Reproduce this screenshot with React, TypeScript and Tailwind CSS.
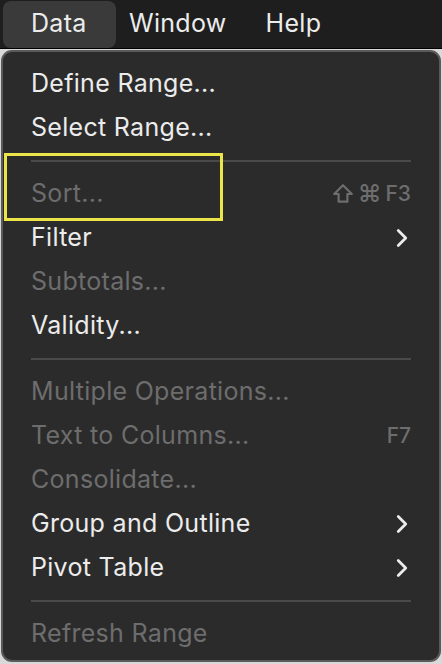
import { ChevronRight } from "lucide-react";

type Item =
  | { kind: "sep" }
  | { kind: "item"; label: string; disabled?: boolean; shortcut?: string; sub?: boolean; boxed?: boolean };

const ITEMS: Item[] = [
  { kind: "item", label: "Define Range..." },
  { kind: "item", label: "Select Range..." },
  { kind: "sep" },
  { kind: "item", label: "Sort...", disabled: true, shortcut: "F3", boxed: true },
  { kind: "item", label: "Filter", sub: true },
  { kind: "item", label: "Subtotals...", disabled: true },
  { kind: "item", label: "Validity..." },
  { kind: "sep" },
  { kind: "item", label: "Multiple Operations...", disabled: true },
  { kind: "item", label: "Text to Columns...", disabled: true, shortcut: "F7" },
  { kind: "item", label: "Consolidate...", disabled: true },
  { kind: "item", label: "Group and Outline", sub: true },
  { kind: "item", label: "Pivot Table", sub: true },
  { kind: "sep" },
  { kind: "item", label: "Refresh Range", disabled: true },
];

const App = () => {
  return (
    <div className="w-[442px] h-[664px] bg-[#d9d9d9] overflow-hidden font-['Inter',sans-serif]">
      {/* Menu bar */}
      <div className="h-[49px] bg-[#1e1e1e] border-b border-black flex items-center px-[3px]">
        <div className="h-[47px] w-[113px] rounded-lg bg-[#3a3a3a] flex items-center pl-[28px] text-[25px] tracking-[0.3px] text-[#ececec]">
          Data
        </div>
        <div className="ml-[13px] text-[25px] tracking-[0.3px] text-[#ececec]">Window</div>
        <div className="ml-[39px] text-[25px] tracking-[0.3px] text-[#ececec]">Help</div>
      </div>

      {/* Dropdown */}
      <div className="mx-[1px] mt-[1px] h-[612px] rounded-[11px] bg-[#2b2b2b] border-[2px] border-[#5a5a5a] pt-[10px] px-[28px]">
        {ITEMS.map((item, i) =>
          item.kind === "sep" ? (
            <div key={i} className="h-[22px] flex items-center">
              <div className="h-[2px] w-full bg-[#4a4a4a]" />
            </div>
          ) : (
            <div key={i} className="relative h-[44px] flex items-center justify-between">
              {item.boxed && (
                <div className="absolute left-[-27px] top-[-19px] w-[219px] h-[68px] border-[3px] border-[#ebe54a] pointer-events-none" />
              )}
              <span className={`text-[25px] tracking-[0.3px] ${item.disabled ? "text-[#6d6d6d]" : "text-[#ececec]"}`}>
                {item.label}
              </span>
              {item.shortcut && (
                <span className="flex items-center gap-[4px] text-[21px] font-medium text-[#6d6d6d]">
                  {item.shortcut === "F3" && (
                    <>
                      <svg width="22" height="22" viewBox="0 0 20 20" fill="none" stroke="#6d6d6d" strokeWidth="2" strokeLinejoin="round">
                        <path d="M10 2 L18 10 L14 10 L14 17 L6 17 L6 10 L2 10 Z" />
                      </svg>
                      <span className="text-[24px] leading-none">⌘</span>
                    </>
                  )}
                  {item.shortcut}
                </span>
              )}
              {item.sub && <ChevronRight className="w-[30px] h-[30px] text-[#ececec] mr-[-6px]" strokeWidth={2.2} />}
            </div>
          )
        )}
      </div>
    </div>
  );
};

export default App;
